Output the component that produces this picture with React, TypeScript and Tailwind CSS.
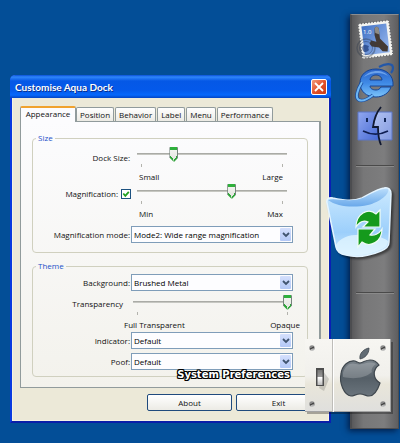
import React, { useState } from "react";

type SliderProps = {
  id: string;
  label: string;
  defaultValue: number;
  low: string;
  high: string;
  wide?: boolean;
};

function Slider({ id, label, defaultValue, low, high, wide = false }: SliderProps) {
  return (
    <div className={wide ? "mr-1" : "ml-[6px] mr-5"}>
      <input
        id={id}
        type="range"
        aria-label={label}
        defaultValue={defaultValue}
        className="block h-[15px] w-full appearance-none bg-[linear-gradient(#9c9d98,#d4d5cf)] bg-[length:100%_2px] bg-[position:0_6px] bg-no-repeat [&::-webkit-slider-thumb]:h-[15px] [&::-webkit-slider-thumb]:w-[9px] [&::-webkit-slider-thumb]:appearance-none [&::-webkit-slider-thumb]:rounded-t-[1px] [&::-webkit-slider-thumb]:border-x [&::-webkit-slider-thumb]:border-[#77857d] [&::-webkit-slider-thumb]:bg-[linear-gradient(to_top_right,#2fa63a_66%,transparent_66%),linear-gradient(to_top_left,#2fa63a_66%,transparent_66%),linear-gradient(#2fb03c_3px,#f1f2ee_3px,#dfe0dc)] [&::-webkit-slider-thumb]:bg-[length:50%_6px,50%_6px,100%_100%] [&::-webkit-slider-thumb]:bg-[position:left_bottom,right_bottom,0_0] [&::-webkit-slider-thumb]:bg-no-repeat [&::-webkit-slider-thumb]:[clip-path:polygon(0_0,100%_0,100%_70%,50%_100%,0_70%)]"
      />
      <div className="mx-1 mt-[2px] flex h-[3px] justify-between">
        <span className="w-px bg-[#b3b3ad]" />
        <span className="w-px bg-[#b3b3ad]" />
      </div>
      <div
        className={
          wide
            ? "-ml-[9px] -mr-2 mt-1 flex h-3 justify-between leading-3"
            : "ml-[2px] mr-1 mt-1 flex h-3 justify-between leading-3"
        }
      >
        <span>{low}</span>
        <span>{high}</span>
      </div>
    </div>
  );
}

function Dropdown({ id, options }: { id: string; options: string[] }) {
  return (
    <div className="relative mr-[14px] h-[17px]">
      <select
        id={id}
        className="h-full w-full appearance-none border border-[#7f9db9] bg-[#fdfdff] pl-[2px] pr-4 leading-3 text-black"
      >
        {options.map((o) => (
          <option key={o}>{o}</option>
        ))}
      </select>
      <span className="pointer-events-none absolute bottom-[2px] right-[2px] top-[2px] flex w-[11px] items-center justify-center rounded-[1px] bg-linear-to-b from-[#d5e0fd] to-[#b3c8f6]">
        <svg viewBox="0 0 8 6" className="h-[6px] w-2" fill="none" stroke="#40546f" strokeWidth="1.8">
          <path d="M1 1l3 3 3-3" />
        </svg>
      </span>
    </div>
  );
}

const rowClass = "grid grid-cols-[98px_1fr]";
const labelClass = "pr-px text-right leading-[17px] whitespace-nowrap";
const groupClass = "mx-[11px] rounded-[4px] border border-[#d0d0bf]";
const legendClass = "ml-[3px] px-[2px] leading-3 text-[#1c50c8]";
const buttonClass =
  "h-[17px] w-[85px] rounded-[2px] border border-[#1f4a7d] bg-linear-to-b from-white to-[#ecebe5] leading-3";

const tabs = ["Appearance", "Position", "Behavior", "Label", "Menu", "Performance"];

function SettingsWindow() {
  const [active, setActive] = useState(tabs[0]);
  return (
    <section className="rounded-t-[5px] border-2 border-t-0 border-[#0a3be0] border-b-[#0a1fa8] border-r-[#0a1fb4] bg-[#ece9d8] shadow-[inset_0_0_0_1px_#f6f3e2]">
      <header className="-mx-[2px] flex h-[23px] items-center justify-between rounded-t-[5px] bg-[linear-gradient(#0a4fd8,#2f86fa_2px,#0558e6_6px,#0459ea_15px,#0668fb_20px,#0244c4)] pl-[5px] pr-1">
        <h1 className="font-[Lato,sans-serif] text-[10px] font-bold leading-4 text-white [text-shadow:1px_1px_0_#0a2f8c]">
          Customise Aqua Dock
        </h1>
        <button
          type="button"
          aria-label="Close"
          className="flex h-4 w-4 items-center justify-center rounded-[2px] border border-white bg-linear-to-br from-[#f09a7c] via-[#e4532c] to-[#c93a14]"
        >
          <svg viewBox="0 0 10 10" className="h-[10px] w-[10px]" stroke="#fff" strokeWidth="1.8">
            <path d="M1 1l8 8M9 1L1 9" />
          </svg>
        </button>
      </header>

      <div className="px-2 pb-[10px] pt-2">
        <div role="tablist" className="relative -mb-px flex items-end">
          {tabs.map((tab) => (
            <button
              key={tab}
              type="button"
              role="tab"
              aria-selected={tab === active}
              onClick={() => setActive(tab)}
              className={
                tab === active
                  ? "h-[16px] w-14 rounded-t-[2px] border-x border-t-2 border-x-[#919b9c] border-t-[#f0a22e] bg-[#fcfcfe] pb-[2px] leading-3"
                  : "mr-px mb-px h-[14px] rounded-t-[2px] border border-b-0 border-[#919b9c] bg-linear-to-b from-white to-[#ecebe4] px-[3px] leading-3"
              }
            >
              {tab}
            </button>
          ))}
        </div>

        <div className="border border-r-2 border-[#919b9c] bg-linear-to-b from-[#fcfcfe] to-[#f3f2ec] pb-[10px] pt-[10px]">
          <fieldset className={`${groupClass} pb-[9px]`}>
            <legend className={legendClass}>Size</legend>
            <div className={`${rowClass} pt-[3px]`}>
              <label htmlFor="dock-size" className="pr-px pt-[3px] text-right leading-4">
                Dock Size:
              </label>
              <Slider id="dock-size" label="Dock Size" defaultValue={23} low="Small" high="Large" />
            </div>
            <div className={`${rowClass} pt-px`}>
              <div className="flex h-5 items-center justify-end gap-[3px]">
                <label htmlFor="magnify">Magnification:</label>
                <span className="relative h-[10px] w-[10px]">
                  <input
                    id="magnify"
                    type="checkbox"
                    defaultChecked
                    className="peer block h-full w-full appearance-none border border-[#1c5180] bg-white"
                  />
                  <svg
                    viewBox="0 0 10 10"
                    className="pointer-events-none absolute inset-0 hidden h-full w-full peer-checked:block"
                    fill="none"
                    stroke="#21a121"
                    strokeWidth="1.8"
                  >
                    <path d="M2.300 4.500l2 2.300 3.500-4" />
                  </svg>
                </span>
              </div>
              <Slider id="magnification" label="Magnification" defaultValue={64} low="Min" high="Max" />
            </div>
            <div className={`${rowClass} pt-[6px]`}>
              <label htmlFor="mode" className={labelClass}>
                Magnification mode:
              </label>
              <Dropdown id="mode" options={["Mode2: Wide range magnification", "Mode1"]} />
            </div>
          </fieldset>

          <fieldset className={`${groupClass} mt-[7px] pb-[6px]`}>
            <legend className={legendClass}>Theme</legend>
            <div className={`${rowClass} pt-[2px]`}>
              <label htmlFor="background" className={labelClass}>
                Background:
              </label>
              <Dropdown id="background" options={["Brushed Metal", "Default"]} />
            </div>
            <div className={`${rowClass} pt-1`}>
              <label htmlFor="transparency" className="pr-2 text-right leading-[17px]">
                Transparency
              </label>
              <div className="ml-[2px] mr-[11px]">
                <Slider
                  id="transparency"
                  label="Transparency"
                  defaultValue={100}
                  low="Full Transparent"
                  high="Opaque"
                  wide
                />
              </div>
            </div>
            <div className={`${rowClass} pt-px`}>
              <label htmlFor="indicator" className={labelClass}>
                Indicator:
              </label>
              <Dropdown id="indicator" options={["Default"]} />
            </div>
            <div className={`${rowClass} pt-1`}>
              <label htmlFor="poof" className={labelClass}>
                Poof:
              </label>
              <Dropdown id="poof" options={["Default"]} />
            </div>
          </fieldset>
        </div>

        <div className="mt-[6px] flex justify-end gap-1">
          <button type="button" className={buttonClass}>
            About
          </button>
          <button type="button" className={buttonClass}>
            Exit
          </button>
        </div>
      </div>
    </section>
  );
}

function MailIcon() {
  return (
    <svg viewBox="0 0 40 44" className="h-11 w-10">
      <defs>
        <linearGradient id="stamp" x1="0" y1="0" x2="1" y2="1">
          <stop offset="0" stopColor="#3f70c4" />
          <stop offset="1" stopColor="#9dbcf0" />
        </linearGradient>
      </defs>
      <g transform="rotate(-7 20 22)">
        <rect x="5" y="5" width="31" height="35" fill="#f4f4f0" />
        <rect x="5" y="5" width="31" height="35" fill="none" stroke="#65666a" strokeWidth="1.6" strokeDasharray="1 2" />
        <rect x="8" y="8" width="25" height="29" fill="url(#stamp)" />
        <path d="M21 11c2-2 4-1 4 2v9l3 4 4 5-1 5-5-1-3-4-7-2-2-3 2-3 5 2-1-7z" fill="#443a34" />
        <path d="M21 11c2-2 4-1 4 2v5l-4-2z" fill="#8e8b84" />
      </g>
      <circle cx="11" cy="31" r="9" fill="none" stroke="#333b4a" strokeOpacity=".4" strokeWidth="1.5" />
      <circle cx="11" cy="31" r="6.500" fill="none" stroke="#26334f" strokeOpacity=".4" />
      <path d="M11 28c-4-1-5 4-2 7 2 0 3 0 5-2-1-2-1-2 0-4z" fill="#1e3c7c" fillOpacity=".7" />
      <text x="8" y="17" fontSize="6" fill="#fff" fontFamily="Open Sans, sans-serif">
        1.0
      </text>
    </svg>
  );
}

function ExplorerIcon() {
  return (
    <svg viewBox="0 0 40 42" className="h-[42px] w-10">
      <defs>
        <linearGradient id="globe" x1="0" y1="0" x2="0" y2="1">
          <stop offset="0" stopColor="#2a62c8" />
          <stop offset=".5" stopColor="#3f8ae6" />
          <stop offset="1" stopColor="#7cc4fa" />
        </linearGradient>
      </defs>
      <path
        d="M24 5c7-4 14-4 14 1 0 2-1 4-2 5"
        fill="none"
        stroke="#2357a8"
        strokeWidth="2.2"
      />
      <path
        d="M21 7C11 7 5 13 5 21s6 14 16 14c7 0 13-4 15-10H26c-1 2-3 3-5 3-4 0-6-2-6-4h23C39 13 31 7 21 7zm-6 11c0-3 3-5 6-5s6 2 6 5z"
        fill="url(#globe)"
        stroke="#164595"
        strokeWidth="1"
      />
      <path d="M9 15c3-4 8-6 13-6 5 0 9 2 11 5-6-4-16-4-24 1z" fill="#8fc0f8" fillOpacity=".65" />
      <path d="M7 20C2 28 0 36 4 38c4 2 9-1 14-5" fill="none" stroke="#1b4c9e" strokeWidth="3.5" />
      <path d="M7 20C2 28 0 36 4 38c4 2 9-1 14-5" fill="none" stroke="#6db7f4" strokeWidth="2" />
    </svg>
  );
}

function FinderIcon() {
  return (
    <svg viewBox="0 0 40 42" className="h-[42px] w-10">
      <defs>
        <linearGradient id="faceLeft" x1="0" y1="0" x2="1" y2="1">
          <stop offset="0" stopColor="#92a8f0" />
          <stop offset="1" stopColor="#4569d4" />
        </linearGradient>
        <linearGradient id="faceRight" x1="0" y1="0" x2="1" y2="1">
          <stop offset="0" stopColor="#b4c4f2" />
          <stop offset="1" stopColor="#839ae0" />
        </linearGradient>
      </defs>
      <path d="M3 7h20l-5 15h5l1 13H3z" fill="url(#faceLeft)" />
      <path d="M23 7h14v28H24l-1-13h-5z" fill="url(#faceRight)" />
      <path d="M3 7h34v28H3z" fill="none" stroke="#5a74c4" />
      <path d="M26 2c-5 6-7 12-8 20h5c0 6 0 11 3 18" fill="none" stroke="#101830" strokeWidth="1.8" />
      <path d="M8 26c8 4 17 4 25 0" fill="none" stroke="#101f52" strokeWidth="1.6" />
      <path d="M12 13v4M30 13v4" stroke="#122658" strokeWidth="2" />
    </svg>
  );
}

function TrashIcon() {
  return (
    <svg viewBox="0 0 68 74" className="h-[74px] w-[68px] drop-shadow-[2px_2px_1px_rgba(0,0,0,0.5)]">
      <defs>
        <linearGradient id="bin" x1="0" y1="0" x2="0" y2="1">
          <stop offset="0" stopColor="#cdeaff" />
          <stop offset=".65" stopColor="#9ccffb" />
          <stop offset="1" stopColor="#cdeafe" />
        </linearGradient>
        <linearGradient id="binBack" x1="0" y1="0" x2="0" y2="1">
          <stop offset="0" stopColor="#b8dcfb" />
          <stop offset="1" stopColor="#69a8ea" />
        </linearGradient>
      </defs>
      <path
        d="M2 18c-1-4 2-6 6-5 9 2 19 4 29 0 8-4 15-9 22-10 5-1 7 2 7 6l-2 48c0 5-3 7-8 9-12 5-24 7-35 4-6-1-9-3-10-8z"
        fill="url(#bin)"
        stroke="#e4f4ff"
        strokeWidth="1.5"
      />
      <path d="M3 15c7-3 23 4 37-3 8-4 17-9 23-8 2 5-8 13-20 16-14 3-31 2-40-5z" fill="url(#binBack)" />
      <path d="M11 60c4-8 16-11 27-10 11 0 20 2 25 6 0 5-3 7-8 9-12 5-24 7-35 4-5-1-8-3-9-9z" fill="#e4f7ff" fillOpacity=".75" />
      <path
        d="M31 42c0-13 12-20 20-13l4-4v17H38l5-5c-4-2-8-1-12 5z"
        fill="#159a1c"
        stroke="#f0fdf4"
        strokeWidth="1.2"
      />
      <path
        d="M57 44c0 13-12 19-20 13l-4 5V44h17l-5 6c4 1 9-1 12-6z"
        fill="#159a1c"
        stroke="#f0fdf4"
        strokeWidth="1.2"
      />
    </svg>
  );
}

function PreferencesIcon() {
  return (
    <svg viewBox="0 0 88 76" className="h-[76px] w-[88px]">
      <defs>
        <linearGradient id="plate" x1="0" y1="0" x2="0" y2="1">
          <stop offset="0" stopColor="#f7f6f2" />
          <stop offset=".5" stopColor="#f1f0ec" />
          <stop offset=".62" stopColor="#e9e6da" />
          <stop offset="1" stopColor="#dfdfdd" />
        </linearGradient>
        <linearGradient id="apple" x1="0" y1="0" x2="0" y2="1">
          <stop offset="0" stopColor="#79828a" />
          <stop offset=".5" stopColor="#555f67" />
          <stop offset="1" stopColor="#6a747c" />
        </linearGradient>
        <linearGradient id="lever" x1="0" y1="0" x2="0" y2="1">
          <stop offset="0" stopColor="#777" />
          <stop offset=".45" stopColor="#999" />
          <stop offset=".5" stopColor="#fff" />
          <stop offset="1" stopColor="#bbb" />
        </linearGradient>
      </defs>
      <rect x="2" y="3" width="86" height="72" fill="#000" fillOpacity=".3" />
      <rect x="0" y="0" width="86" height="73" fill="url(#plate)" />
      <path d="M0 72.500h86M85.500 0v73" stroke="#a3a3a3" />
      <path d="M27.500 0v73" stroke="#bebdb9" />
      <path d="M28.500 0v73" stroke="#fff" />
      {[
        [7, 9],
        [7, 65],
        [78, 9],
        [78, 65],
      ].map(([x, y]) => (
        <g key={`${x}-${y}`}>
          <circle cx={x} cy={y} r="2.7" fill="#8a8a8a" />
          <path d={`M${x - 2} ${y + 1}l4-2`} stroke="#333" />
          <path d={`M${x - 1} ${y + 2}h3`} stroke="#ddd" />
        </g>
      ))}
      <path d="M18 32l6 8-5 12-5-3z" fill="#000" fillOpacity=".15" />
      <rect x="11" y="29" width="8" height="18" fill="#4d4d4d" />
      <rect x="12.500" y="31" width="5" height="15" fill="url(#lever)" />
      <path d="M55 20c-1-6 4-10 9-11 0 6-4 10-9 11z" fill="#626c74" stroke="#3c444b" strokeWidth=".8" />
      <path
        d="M55 24c4-1 6-3 10-3 4 0 7 2 9 5-7 5-6 14 1 18-2 6-6 13-11 13-3 0-5-2-9-2s-6 2-9 2c-7-1-12-13-10-22 1-9 8-14 14-13 2 1 4 2 5 2z"
        fill="url(#apple)"
        stroke="#3f474e"
        strokeWidth="1.2"
      />
      <path d="M38 34c2-8 8-11 13-9 7 2 12-4 20 0-4 3-5 6-4 8-8 7-20 7-29 5z" fill="#fff" fillOpacity=".2" />
    </svg>
  );
}

const Divider = () => <li aria-hidden="true" className="mx-1 h-[2px] border-b border-[#8a8a8a] bg-[#4a4a4a]" />;

function Dock() {
  return (
    <nav
      aria-label="Dock"
      className="mt-[14px] h-[415px] w-[49px] shrink-0 border border-l-2 border-[#4c4d50] border-t-[#8b8d90] bg-[linear-gradient(90deg,#59595b,#777778_25%,#7d7d7e_70%,#5e5e60)] shadow-[-2px_2px_6px_rgba(0,10,40,0.7)]"
    >
      <ul className="flex flex-col">
        <li className="flex h-[47px] justify-center pt-[2px]">
          <MailIcon />
        </li>
        <li className="flex h-[42px] justify-center">
          <ExplorerIcon />
        </li>
        <li className="flex h-[42px] justify-center pt-px">
          <FinderIcon />
        </li>
        <li className="h-[19px]" />
        <Divider />
        <li className="relative h-[125px]">
          <div className="absolute -left-[27px] top-[18px]">
            <TrashIcon />
          </div>
        </li>
        <Divider />
        <li className="relative h-[120px]">
          <div className="absolute -left-[47px] top-[45px]">
            <PreferencesIcon />
          </div>
          <span className="absolute right-[108px] top-[73px] whitespace-nowrap font-['DejaVu_Sans',sans-serif] text-[10px] font-bold leading-4 text-white [text-shadow:1px_0_#000,-1px_0_#000,0_1px_#000,0_-1px_#000,1px_1px_#000,-1px_-1px_#000,1px_-1px_#000,-1px_1px_#000]">
            System Preferences
          </span>
        </li>
      </ul>
    </nav>
  );
}

export default function App() {
  return (
    <main className="flex min-h-screen items-start overflow-hidden bg-[#034e97] pr-px font-['Open_Sans',sans-serif] text-[8px] leading-3 text-[#111]">
      <div className="mr-[19px] min-w-0 flex-1 pl-[10px] pt-[75px]">
        <SettingsWindow />
      </div>
      <Dock />
    </main>
  );
}
